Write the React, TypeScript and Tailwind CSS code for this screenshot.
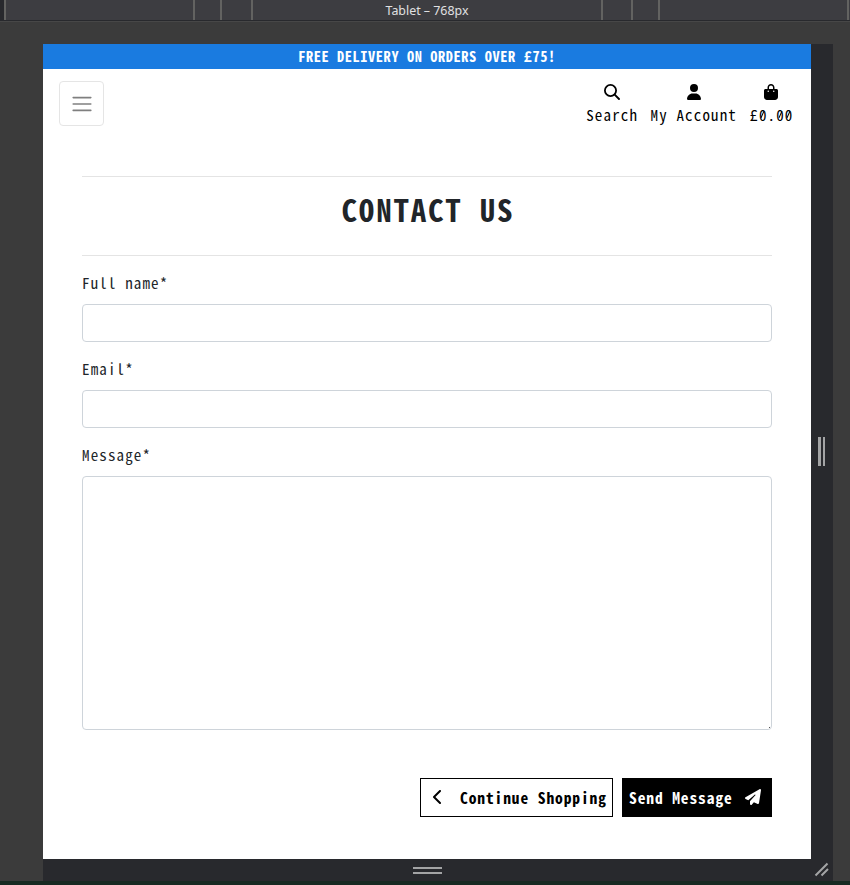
import type { ReactNode } from "react";
import { FaUser, FaBagShopping, FaChevronLeft, FaPaperPlane } from "react-icons/fa6";

const mono = "font-['Noto_Sans_Mono_CJK_SC','DejaVu_Sans_Mono',monospace]";

function RulerCell({ className, children }: { className: string; children?: ReactNode }) {
  return (
    <div className={`h-5 shrink-0 border-l-2 border-[#636361] bg-[#3d3d41] ${className}`}>{children}</div>
  );
}

function Ruler() {
  return (
    <div className="flex h-[22px] border-b border-[#474747] bg-[#28292d] pl-1 overflow-hidden">
      <RulerCell className="w-[189px]" />
      <RulerCell className="w-[27px]" />
      <RulerCell className="w-[31px]" />
      <RulerCell className="w-[350px] text-center font-['Noto_Sans','Open_Sans',sans-serif] text-[12.4px] leading-[21px] text-[#e0e0e1]">
        Tablet – 768px
      </RulerCell>
      <RulerCell className="w-[30px]" />
      <RulerCell className="w-[27px]" />
      <RulerCell className="w-[189px]" />
      <RulerCell className="w-[3px]" />
    </div>
  );
}

function SearchIcon() {
  return (
    <svg width="16" height="16" viewBox="0 0 16 16" fill="none" stroke="currentColor" strokeLinecap="round">
      <circle cx="6.5" cy="6.5" r="5.6" strokeWidth="1.8" />
      <path d="m10.7 10.7 4.3 4.3" strokeWidth="1.9" />
    </svg>
  );
}

/* A zero crossed by a thin diagonal stroke. */
function Zero() {
  return (
    <span className="relative after:absolute after:left-[3.5px] after:top-[7px] after:h-[7px] after:w-px after:rotate-[24deg] after:bg-black after:content-['']">
      0
    </span>
  );
}

function NavItem({ icon, label }: { icon: ReactNode; label: ReactNode }) {
  return (
    <a className="flex flex-col items-center text-black">
      <span className="flex h-4 items-center text-base">{icon}</span>
      <span className="mt-[3px] whitespace-pre leading-6">{label}</span>
    </a>
  );
}

function Field({ label, area }: { label: string; area?: boolean }) {
  return (
    <label className="mb-4 block text-[#212529]">
      <span className="mb-[10px] block leading-[22px]">{label}</span>
      {area ? (
        <span className="relative block after:absolute after:bottom-[2px] after:right-[2px] after:size-px after:bg-[#555] after:content-['']">
          <textarea className="block h-[254px] w-full resize-none rounded border border-[#ced4da] bg-white" />
        </span>
      ) : (
        <input className="block h-[38px] w-full rounded border border-[#ced4da] bg-white" />
      )}
    </label>
  );
}

export default function App() {
  return (
    <div className="flex h-[885px] w-[850px] flex-col overflow-hidden bg-[#3b3b3b]">
      <Ruler />
      <div className="ml-[43px] mt-[22px] grid h-[837px] w-[790px] grid-cols-[768px_22px] grid-rows-[815px_22px] bg-[#28292d]">
        <main className={`bg-white text-[15px] tracking-[1.14px] ${mono}`}>
          <div className="h-[25px] bg-[#1a7be0] text-center text-[14.4px] font-bold leading-[24px] tracking-[0.576px] text-white">
            FREE DELIVERY ON ORDERS OVER £75!
          </div>
          <header className="flex h-[107px] items-start justify-between pl-4 pr-[17.5px] pt-3">
            <button className="flex size-[45px] items-center justify-center rounded border border-[#e5e5e5]">
              <svg width="24" height="24" viewBox="0 0 30 30" stroke="#000" strokeOpacity=".5" strokeWidth="2" strokeLinecap="round">
                <path d="M4 7h22M4 15h22M4 23h22" />
              </svg>
            </button>
            <nav className="flex gap-[12.5px] pt-[3px]">
              <NavItem icon={<SearchIcon />} label="Search" />
              <NavItem icon={<FaUser />} label="My Account" />
              <NavItem icon={<FaBagShopping />} label={<>£<Zero />.<Zero /><Zero /></>} />
            </nav>
          </header>
          <section className="mx-[39px]">
            <div className="mb-4 h-20 border-y border-[#e4e4e4] pt-[13px] text-center">
              <h1 className="pl-0.5 text-[31px] font-bold leading-[38px] tracking-[1.78px] text-[#212529]">CONTACT US</h1>
            </div>
            <Field label="Full name*" />
            <Field label="Email*" />
            <Field label="Message*" area />
            <div className="mt-12 flex justify-end gap-[9px] text-[15.5px] font-bold tracking-[0.89px]">
              <button className="flex h-[39px] w-[193px] items-center border border-black pl-3 text-black">
                <FaChevronLeft className="mr-[17px] h-4 w-[10px] shrink-0 -translate-y-px" />
                <span className="whitespace-nowrap">Continue Shopping</span>
              </button>
              <button className="flex h-[39px] w-[150px] items-center bg-black pl-[7px] text-white">
                <span className="whitespace-nowrap">Send Message</span>
                <FaPaperPlane className="ml-3 size-4 shrink-0 -translate-y-px" />
              </button>
            </div>
          </section>
        </main>
        <div className="flex items-center justify-center gap-0.5 pr-px">
          <i className="h-[29px] w-[3px] bg-[#a3a4a5]" />
          <i className="h-[29px] w-[2px] bg-[#a3a4a5]" />
        </div>
        <div className="flex flex-col items-center justify-center gap-[3px] pt-px">
          <i className="h-0.5 w-[29px] bg-[#a3a4a5]" />
          <i className="h-0.5 w-[29px] bg-[#a3a4a5]" />
        </div>
        <svg width="22" height="22" stroke="#a3a4a5" strokeWidth="2">
          <path d="M4.5 16.5 16.5 4.5M10.5 16.5 17 10" />
        </svg>
      </div>
      <div className="h-1 bg-[#172a22]" />
    </div>
  );
}
